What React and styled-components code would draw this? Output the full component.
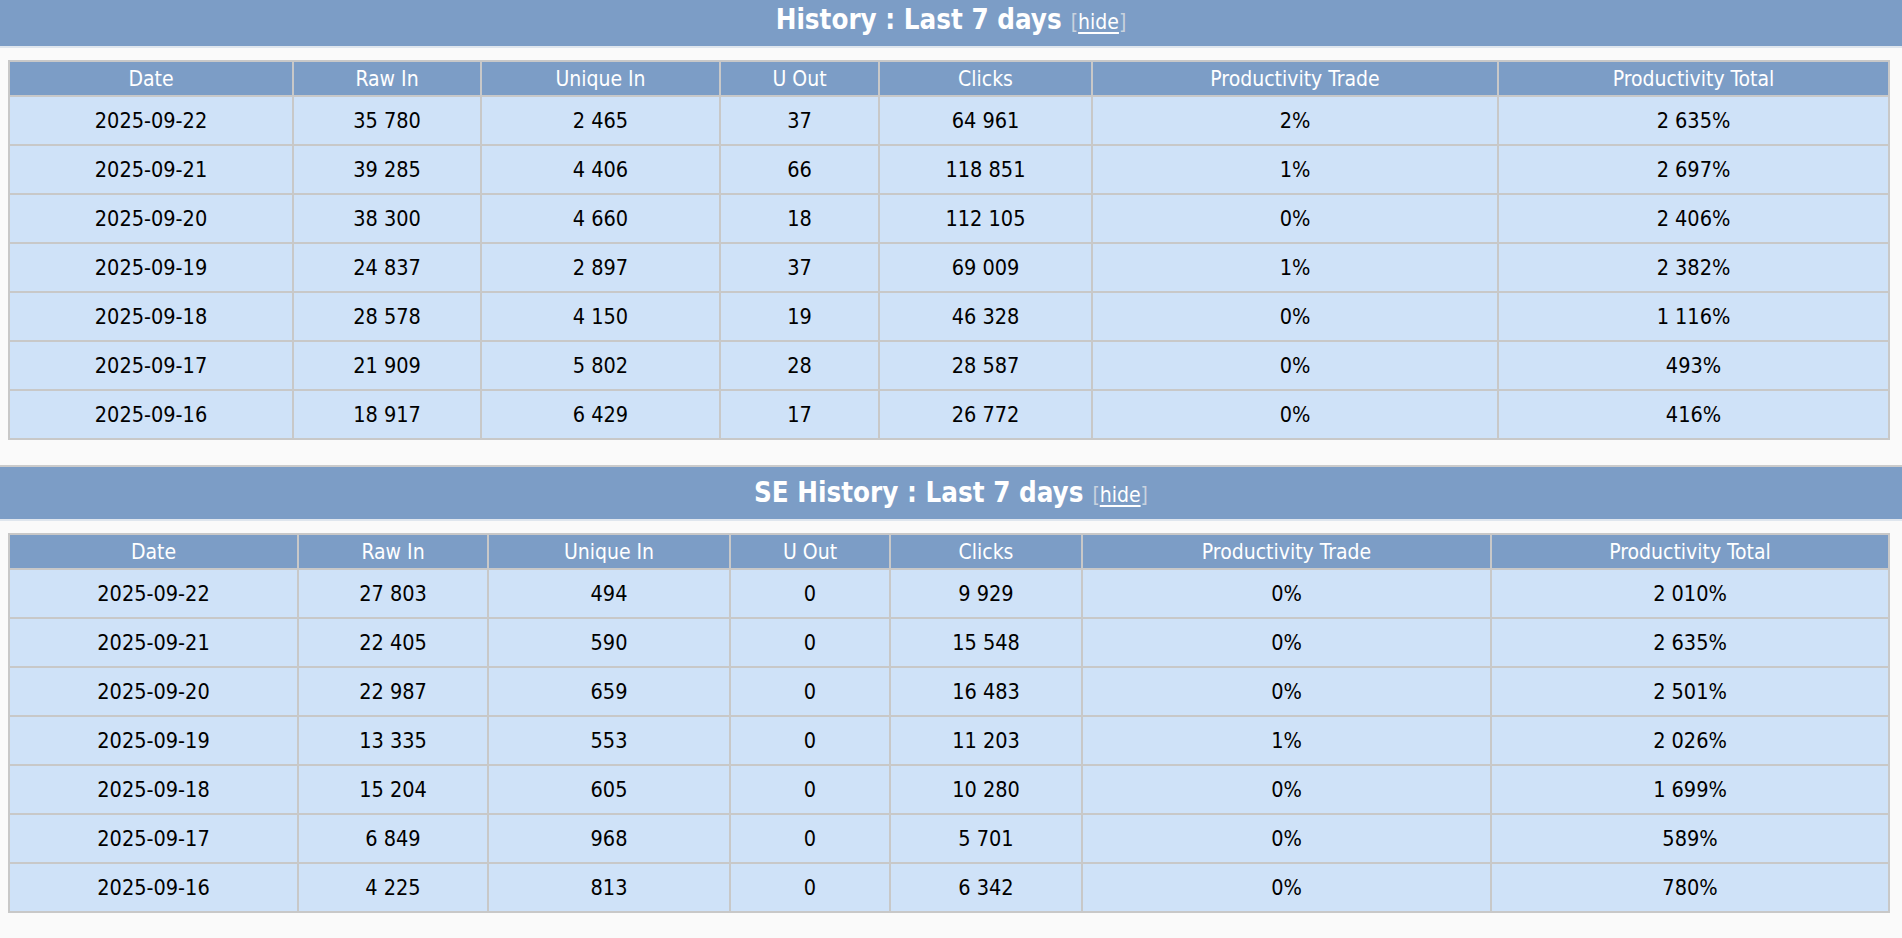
import React from "react";
import styled, { createGlobalStyle } from "styled-components";

const GlobalStyle = createGlobalStyle`
  html, body {
    margin: 0;
    padding: 0;
    background: #fafafa;
    font-family: "DejaVu Sans Condensed", "DejaVu Sans", Tahoma, Verdana, sans-serif;
    font-stretch: condensed;
  }
`;

const Page = styled.div`
  margin-top: -8px;
`;

const Section = styled.section`
  border-top: 2px solid #cbcbcb;
  padding-bottom: 25px;
`;

const TitleBar = styled.div`
  height: 52px;
  background: #7c9dc6;
  border-bottom: 2px solid #dfe6ee;
  display: flex;
  align-items: center;
  justify-content: center;
  gap: 9px;
  color: #fff;
`;

const Title = styled.h2`
  margin: 0;
  font-size: 27.5px;
  font-weight: bold;
  line-height: 1;
`;

const Toggle = styled.span`
  font-size: 21px;
  color: #c9d3df;
  line-height: 1;
  padding-top: 4px;
`;

const ToggleLink = styled.a`
  color: #fff;
  text-decoration: underline;
  text-underline-offset: 3px;
  cursor: pointer;
`;

const Table = styled.table`
  margin: 12px 14px 0 8px;
  width: 1880px;
  table-layout: fixed;
  border-collapse: collapse;
  border: 2px solid #c8c8c8;
`;

const HeadCell = styled.th`
  height: 33px;
  padding: 0;
  background: #7c9dc6;
  color: #fff;
  font-weight: normal;
  font-size: 21px;
  text-align: center;
  border: 2px solid #c8c8c8;
`;

const Cell = styled.td`
  height: 47px;
  padding: 0;
  background: #cfe2f8;
  color: #000;
  font-size: 21.5px;
  text-align: center;
  border: 2px solid #c8c8c8;
`;

const headers = [
  "Date",
  "Raw In",
  "Unique In",
  "U Out",
  "Clicks",
  "Productivity Trade",
  "Productivity Total",
];

const history = [
  ["2025-09-22", "35 780", "2 465", "37", "64 961", "2%", "2 635%"],
  ["2025-09-21", "39 285", "4 406", "66", "118 851", "1%", "2 697%"],
  ["2025-09-20", "38 300", "4 660", "18", "112 105", "0%", "2 406%"],
  ["2025-09-19", "24 837", "2 897", "37", "69 009", "1%", "2 382%"],
  ["2025-09-18", "28 578", "4 150", "19", "46 328", "0%", "1 116%"],
  ["2025-09-17", "21 909", "5 802", "28", "28 587", "0%", "493%"],
  ["2025-09-16", "18 917", "6 429", "17", "26 772", "0%", "416%"],
];

const seHistory = [
  ["2025-09-22", "27 803", "494", "0", "9 929", "0%", "2 010%"],
  ["2025-09-21", "22 405", "590", "0", "15 548", "0%", "2 635%"],
  ["2025-09-20", "22 987", "659", "0", "16 483", "0%", "2 501%"],
  ["2025-09-19", "13 335", "553", "0", "11 203", "1%", "2 026%"],
  ["2025-09-18", "15 204", "605", "0", "10 280", "0%", "1 699%"],
  ["2025-09-17", "6 849", "968", "0", "5 701", "0%", "589%"],
  ["2025-09-16", "4 225", "813", "0", "6 342", "0%", "780%"],
];

function StatsSection({ title, rows, widths }) {
  return (
    <Section>
      <TitleBar>
        <Title>{title}</Title>
        <Toggle>
          [<ToggleLink>hide</ToggleLink>]
        </Toggle>
      </TitleBar>
      <Table>
        <colgroup>
          {widths.map((w, i) => (
            <col key={i} style={{ width: w }} />
          ))}
        </colgroup>
        <thead>
          <tr>
            {headers.map((h) => (
              <HeadCell key={h}>{h}</HeadCell>
            ))}
          </tr>
        </thead>
        <tbody>
          {rows.map((r) => (
            <tr key={r[0]}>
              {r.map((v, i) => (
                <Cell key={i}>{v}</Cell>
              ))}
            </tr>
          ))}
        </tbody>
      </Table>
    </Section>
  );
}

export default function App() {
  return (
    <>
      <GlobalStyle />
      <Page>
        <StatsSection
          title="History : Last 7 days"
          rows={history}
          widths={[284, 188, 239, 159, 213, 406, 391]}
        />
        <StatsSection
          title="SE History : Last 7 days"
          rows={seHistory}
          widths={[289, 190, 242, 160, 192, 409, 398]}
        />
      </Page>
    </>
  );
}
